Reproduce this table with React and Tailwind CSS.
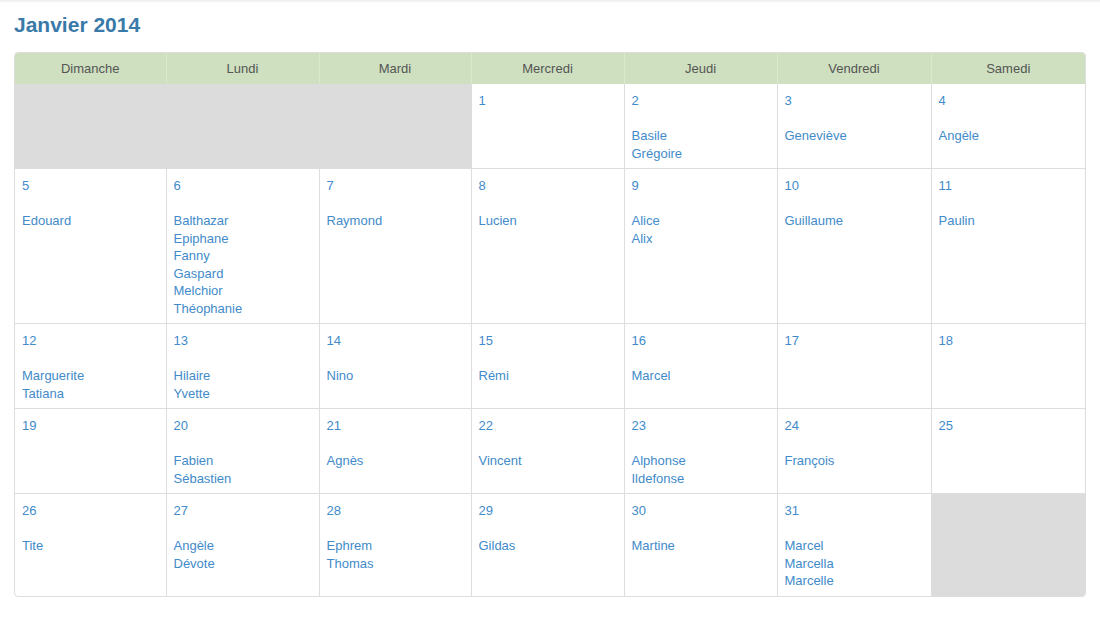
const WEEKDAYS = ["Dimanche", "Lundi", "Mardi", "Mercredi", "Jeudi", "Vendredi", "Samedi"];

const SAINTS = {
  2: ["Basile", "Grégoire"],
  3: ["Geneviève"],
  4: ["Angèle"],
  5: ["Edouard"],
  6: ["Balthazar", "Epiphane", "Fanny", "Gaspard", "Melchior", "Théophanie"],
  7: ["Raymond"],
  8: ["Lucien"],
  9: ["Alice", "Alix"],
  10: ["Guillaume"],
  11: ["Paulin"],
  12: ["Marguerite", "Tatiana"],
  13: ["Hilaire", "Yvette"],
  14: ["Nino"],
  15: ["Rémi"],
  16: ["Marcel"],
  20: ["Fabien", "Sébastien"],
  21: ["Agnès"],
  22: ["Vincent"],
  23: ["Alphonse", "Ildefonse"],
  24: ["François"],
  26: ["Tite"],
  27: ["Angèle", "Dévote"],
  28: ["Ephrem", "Thomas"],
  29: ["Gildas"],
  30: ["Martine"],
  31: ["Marcel", "Marcella", "Marcelle"],
};

// January 2014 starts on a Wednesday
const OFFSET = 3;
const DAYS = 31;

function buildWeeks() {
  const cells = [];
  for (let i = 0; i < OFFSET; i++) cells.push(null);
  for (let d = 1; d <= DAYS; d++) cells.push(d);
  while (cells.length % 7) cells.push(null);
  const weeks = [];
  for (let i = 0; i < cells.length; i += 7) weeks.push(cells.slice(i, i + 7));
  return weeks;
}

function DayCell({ day, last, lastRow }) {
  const names = SAINTS[day] || [];
  return (
    <td
      className={`align-top pl-[7px] pr-[8px] pt-[8px] pb-[6px] text-[13px] leading-[17.5px] text-[#428bca] border-[#ddd] ${last ? "" : "border-r"} ${lastRow ? "" : "border-b"}`}
    >
      <div>{day}</div>
      <div className="mt-[17.5px]">
        {names.map((n) => (
          <div key={n}>{n}</div>
        ))}
      </div>
    </td>
  );
}

export default function App() {
  const weeks = buildWeeks();

  return (
    <div className="min-h-screen bg-white" style={{ fontFamily: '"Liberation Sans", Arial, sans-serif' }}>
      <div className="h-[3px] bg-gradient-to-b from-[#ececec] to-white" />
      <div className="px-[14px]">
        <h1 className="text-[21px] font-bold leading-[22px] text-[#3a7aa9] pt-[11px]">Janvier 2014</h1>

        <div className="mt-[16px] border border-[#ddd] rounded-[4px] overflow-hidden">
          <table className="w-full table-fixed border-collapse">
            <colgroup>
              <col className="w-[151px]" />
              <col className="w-[153px]" />
              <col className="w-[152px]" />
              <col className="w-[153px]" />
              <col className="w-[153px]" />
              <col className="w-[154px]" />
              <col />
            </colgroup>
            <thead>
              <tr className="bg-[#cee0bf]">
                {WEEKDAYS.map((d, i) => (
                  <th
                    key={d}
                    className={`h-[31px] text-[13px] font-normal text-[#555] ${i < 6 ? "border-r border-[#dbe8d0]" : ""}`}
                  >
                    {d}
                  </th>
                ))}
              </tr>
            </thead>
            <tbody>
              {weeks.map((week, wi) => {
                const lastRow = wi === weeks.length - 1;
                const cells = [];
                let i = 0;
                while (i < 7) {
                  if (week[i] === null) {
                    let span = 0;
                    while (i + span < 7 && week[i + span] === null) span++;
                    const last = i + span === 7;
                    cells.push(
                      <td
                        key={`e${i}`}
                        colSpan={span}
                        className={`bg-[#dcdcdc] border-[#ddd] ${last ? "" : "border-r"} ${lastRow ? "" : "border-b"}`}
                      />
                    );
                    i += span;
                  } else {
                    cells.push(<DayCell key={week[i]} day={week[i]} last={i === 6} lastRow={lastRow} />);
                    i++;
                  }
                }
                return <tr key={wi}>{cells}</tr>;
              })}
            </tbody>
          </table>
        </div>
      </div>
    </div>
  );
}
